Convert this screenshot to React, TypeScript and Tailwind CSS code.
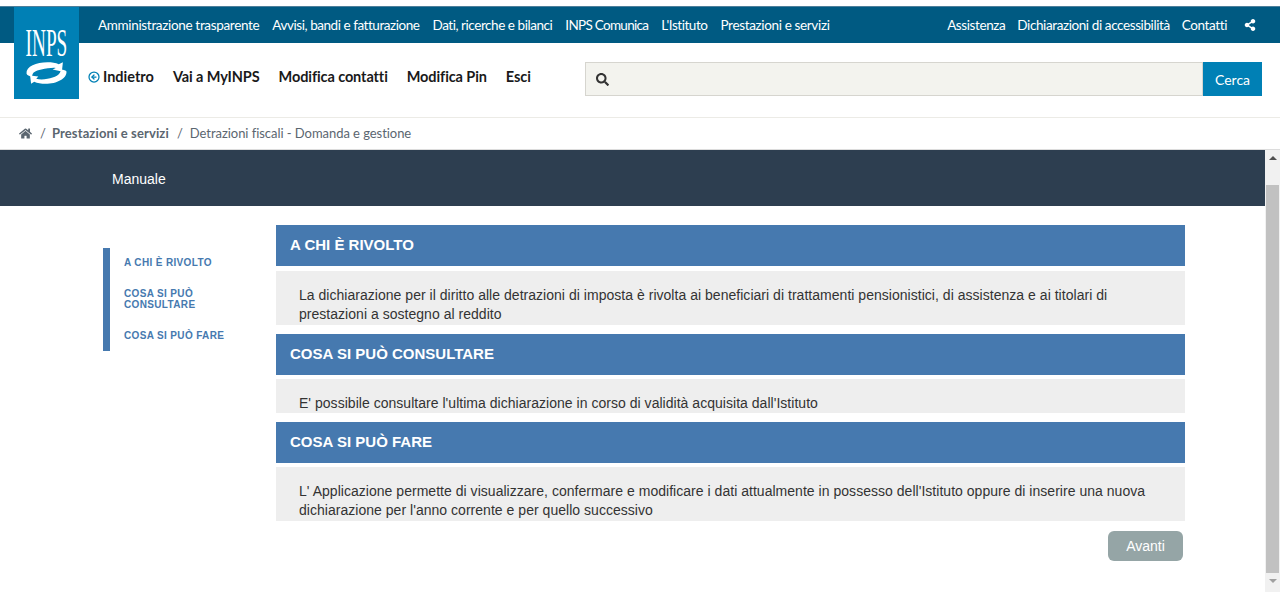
import { ArrowLeftCircle } from "lucide-react"
import { FaHome, FaSearch, FaShareAlt } from "react-icons/fa"

const topLeft = [
  { label: "Amministrazione trasparente", cls: "tracking-[-0.33px]" },
  { label: "Avvisi, bandi e fatturazione", cls: "" },
  { label: "Dati, ricerche e bilanci", cls: "" },
  { label: "INPS Comunica", cls: "tracking-[-0.7px]" },
  { label: "L'Istituto", cls: "" },
  { label: "Prestazioni e servizi", cls: "tracking-[-0.35px]" },
]
const topRight = ["Assistenza", "Dichiarazioni di accessibilità", "Contatti"]
const actions = ["Vai a MyINPS", "Modifica contatti", "Modifica Pin", "Esci"]

const sections = [
  {
    title: "A CHI È RIVOLTO",
    body: "La dichiarazione per il diritto alle detrazioni di imposta è rivolta ai beneficiari di trattamenti pensionistici, di assistenza e ai titolari di prestazioni a sostegno al reddito",
    box: "mt-[5px] h-[54px] pt-[15px]",
  },
  {
    title: "COSA SI PUÒ CONSULTARE",
    body: "E' possibile consultare l'ultima dichiarazione in corso di validità acquisita dall'Istituto",
    box: "mt-[4px] h-[34px] pt-[15px]",
  },
  {
    title: "COSA SI PUÒ FARE",
    body: "L' Applicazione permette di visualizzare, confermare e modificare i dati attualmente in possesso dell'Istituto oppure di inserire una nuova dichiarazione per l'anno corrente e per quello successivo",
    box: "mt-[4px] h-[54px] pt-[15px]",
  },
]

function Logo() {
  return (
    <div className="absolute left-[14px] top-[7px] flex h-[92px] w-[65px] flex-col items-center bg-[#0080b5] pt-[15px]">
      <span className="h-[39px] origin-top scale-x-[0.47] font-['Liberation_Serif',serif] text-[41px] leading-[41px] text-white whitespace-nowrap">
        INPS
      </span>
      <svg viewBox="0 0 40 21" className="mt-[1px] h-[22px] w-[41px]" fill="#fff">
        <path d="M.5 11C0 4 10 0 21 0c4 0 8 .5 11 2l4-2-1 9-9-2 3-1.5C26 5 20 6 15 7 9 8 6 10 6 14 3 14 1 12.5.5 11Z" />
        <path d="M39.5 9C40 16 30 21 19 21c-4 0-8-.5-11-2l-3 2-1-8 8 1-2 2c3 1 7 1 11 0C28 15 34 12 34 7 37 7 39 8 39.5 9Z" />
      </svg>
    </div>
  )
}

export default function App() {
  return (
    <div className="relative flex h-[592px] w-[1280px] flex-col overflow-hidden bg-white font-['Lato',sans-serif]">
      <Logo />

      <div className="mt-[6px] flex h-[37px] items-center justify-between border-t border-[#4d7f9b] bg-[#005a82] pl-[98px] pr-[24px] text-[13.5px] text-white">
        <div className="flex gap-[13px] tracking-[-0.45px]">
          {topLeft.map((t) => (
            <span key={t.label} className={`whitespace-nowrap ${t.cls}`}>{t.label}</span>
          ))}
        </div>
        <div className="flex items-center gap-[12px] tracking-[-0.4px]">
          {topRight.map((t) => (
            <span key={t} className="whitespace-nowrap">{t}</span>
          ))}
          <FaShareAlt className="ml-[5px] h-[12px] w-[12px]" />
        </div>
      </div>

      <div className="flex h-[75px] items-start border-b border-[#ecebe6] pl-[88px] pr-[18px]">
        <div className="mt-[23px] flex items-center text-[14.5px] font-bold text-[#19191a]">
          <ArrowLeftCircle className="mr-[3px] h-[12px] w-[12px] text-[#0080b5]" strokeWidth={2.5} />
          <span>Indietro</span>
          <div className="ml-[19px] flex gap-[19px] tracking-[-0.1px]">
            {actions.map((t) => (
              <span key={t} className="whitespace-nowrap">{t}</span>
            ))}
          </div>
        </div>
        <div className="ml-auto mt-[19px] flex h-[34px] w-[677px]">
          <div className="flex flex-1 items-center border border-[#d6d5cf] bg-[#f3f3ee] pl-[10px]">
            <FaSearch className="h-[13px] w-[13px] text-[#333333]" />
          </div>
          <div className="flex w-[59px] items-center justify-center bg-[#0080b5] text-[14px] text-white">Cerca</div>
        </div>
      </div>

      <div className="flex h-[32px] items-center border-b border-[#dcdcdc] pl-[19px] text-[13px] text-[#5b6670]">
        <FaHome className="h-[13px] w-[13px]" />
        <span className="ml-[8px] mr-[6px]">/</span>
        <span className="font-bold tracking-[0.13px]">Prestazioni e servizi</span>
        <span className="ml-[8px] mr-[7px]">/</span>
        <span className="tracking-[-0.05px]">Detrazioni fiscali - Domanda e gestione</span>
      </div>

      <div className="flex min-h-0 flex-1">
        <div className="min-w-0 flex-1 font-['Liberation_Sans',sans-serif]">
          <div className="flex h-[56px] items-center bg-[#2d3e50] pl-[112px] pt-[2px] text-[14px] text-white">Manuale</div>

          <div className="flex pl-[103px] pt-[19px]">
            <div className="mt-[23px] h-[103px] w-[173px] shrink-0">
              <div className="flex h-full flex-col gap-[13px] border-l-[7px] border-[#4679af] pl-[14px] pt-[9px] text-[10px] font-bold leading-[11.5px] tracking-[0.35px] text-[#4679af]">
                <span>A CHI È RIVOLTO</span>
                <span className="mt-[6px]">COSA SI PUÒ<br />CONSULTARE</span>
                <span className="mt-[6px]">COSA SI PUÒ FARE</span>
              </div>
            </div>

            <div className="w-[909px] shrink-0">
              {sections.map((s) => (
                <div key={s.title} className="mb-[9px] last:mb-0">
                  <h2 className="flex h-[41px] items-center bg-[#4679af] pl-[14px] text-[15px] font-bold text-white">
                    {s.title}
                  </h2>
                  <div className={`overflow-hidden bg-[#eeeeee] pl-[23px] pr-[20px] text-[14px] leading-[19px] tracking-[0.03px] text-[#333333] ${s.box}`}>
                    {s.body}
                  </div>
                </div>
              ))}
              <div className="mr-[2px] mt-[10px] flex justify-end">
                <button className="h-[30px] w-[75px] rounded-[6px] bg-[#95a5a6] text-[14px] text-white">Avanti</button>
              </div>
            </div>
          </div>
        </div>

        <div className="flex w-[15px] shrink-0 flex-col items-center bg-[#f1f1f1]">
          <div className="mt-[6px] h-0 w-0 border-x-[4px] border-b-[4px] border-x-transparent border-b-[#505050]" />
          <div className="mt-[25px] h-[388px] w-[13px] bg-[#c1c1c1]" />
          <div className="mt-[6px] h-0 w-0 border-x-[4px] border-t-[4px] border-x-transparent border-t-[#a0a0a0]" />
        </div>
      </div>
    </div>
  )
}
